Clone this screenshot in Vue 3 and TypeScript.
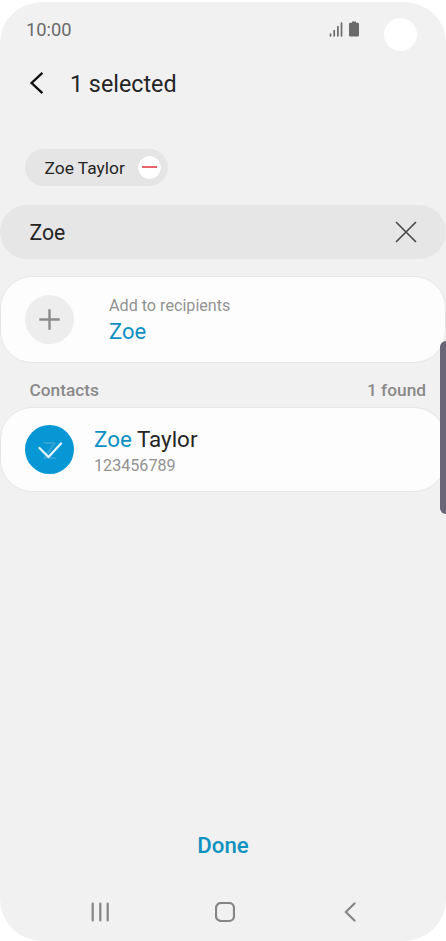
<script setup lang="ts">
import { ref, computed } from 'vue'

interface Contact {
  first: string
  last: string
  phone: string
}

const query = ref('Zoe')
const contacts: Contact[] = [{ first: 'Zoe', last: 'Taylor', phone: '123456789' }]
const selected = ref<Contact[]>([...contacts])
const selectedLabel = computed(() => `${selected.value.length} selected`)
const foundLabel = computed(() => `${contacts.length} found`)
</script>

<template>
  <main class="screen">
    <header class="status">
      <span class="time">10:00</span>
      <svg class="status-icons" width="32" height="18" viewBox="0 0 32 18">
        <path d="M2.500 14.200V15.800M6.200 10.700V15.800M9.900 6.700V15.800M13.500 3V15.800" />
        <path class="battery" d="M24 1.500h4v1.300h1.800q1.200 0 1.200 1.200v11.300q0 1.200-1.200 1.200h-7.600q-1.200 0-1.200-1.200V4q0-1.200 1.200-1.200H24z" />
      </svg>
      <span class="camera"></span>
    </header>

    <div class="title-bar">
      <svg class="back" width="16" height="24" viewBox="0 0 16 24">
        <path d="M14.400 1.800 3.600 12l10.800 10.200" />
      </svg>
      <h1>{{ selectedLabel }}</h1>
    </div>

    <div class="chips">
      <div v-for="c in selected" :key="c.phone" class="chip">
        <span class="chip-name">{{ c.first }} {{ c.last }}</span>
        <span class="remove"><i></i></span>
      </div>
    </div>

    <div class="search">
      <span class="query">{{ query }}</span>
      <svg width="22" height="22" viewBox="0 0 22 22">
        <path d="M1.500 1.500l19 19M20.500 1.500l-19 19" />
      </svg>
    </div>

    <section class="card add">
      <span class="avatar plus">
        <svg width="21" height="21" viewBox="0 0 21 21"><path d="M.3 10.500h20.400M10.500 .3v20.400" /></svg>
      </span>
      <div class="lines">
        <span class="hint">Add to recipients</span>
        <span class="name match">{{ query }}</span>
      </div>
    </section>

    <div class="section-head">
      <span>Contacts</span>
      <span>{{ foundLabel }}</span>
    </div>

    <section v-for="c in contacts" :key="c.phone" class="card contact">
      <span class="avatar checked">
        <span class="initial">Z</span>
        <svg width="26" height="20" viewBox="0 0 26 20"><path d="M2.500 8l9 9L24 3.500" /></svg>
      </span>
      <div class="lines">
        <span class="name"><span class="match">{{ c.first }}</span> {{ c.last }}</span>
        <span class="hint">{{ c.phone }}</span>
      </div>
    </section>

    <div class="done">Done</div>

    <nav class="nav">
      <svg width="20" height="20" viewBox="0 0 20 20"><path d="M2.700 1.500v17M10.300 1.500v17M17.700 1.500v17" /></svg>
      <svg width="20" height="20" viewBox="0 0 20 20"><rect x="1" y="1" width="18" height="18" rx="5" /></svg>
      <svg width="20" height="20" viewBox="0 0 20 20"><path d="M14.500 1.500 5.800 10l8.700 8.500" /></svg>
    </nav>

    <div class="edge-handle"></div>
  </main>
</template>

<style>
body {
  background: #fff;
}
</style>

<style scoped>
.screen {
  position: relative;
  box-sizing: border-box;
  width: 446px;
  height: 941px;
  border-top: 2px solid #fff;
  overflow: hidden;
  border-radius: 42px;
  background: #f1f1f1;
  background-clip: padding-box;
  font-family: Roboto, "Liberation Sans", sans-serif;
  color: #252525;
  display: flex;
  flex-direction: column;
}
svg {
  display: block;
  flex: none;
  fill: none;
  stroke-linecap: round;
  stroke-linejoin: round;
}
.status {
  height: 56px;
  display: flex;
  align-items: center;
  padding-left: 26px;
}
.time {
  width: 302px;
  margin-top: -2px;
  font-size: 18.3px;
  color: #6a6a6a;
}
.status-icons {
  width: 32px;
  margin-top: -2px;
  stroke: #6a6a6a;
  stroke-width: 1.7;
}
.battery {
  fill: #6a6a6a;
  stroke: none;
}
.camera {
  width: 33px;
  height: 33px;
  margin: 8px 0 0 24px;
  border-radius: 50%;
  background: #fff;
}
.title-bar {
  height: 52px;
  display: flex;
  align-items: center;
  padding-left: 28px;
}
.back {
  margin-top: -3px;
  stroke: #111;
  stroke-width: 2.4;
  stroke-linecap: butt;
  stroke-linejoin: miter;
}
h1 {
  margin: 0 0 0 26px;
  font-size: 23.3px;
  font-weight: 400;
}
.chips {
  padding: 39px 0 0 25px;
  height: 55.5px;
  display: flex;
  align-items: flex-start;
}
.chip {
  box-sizing: border-box;
  width: 143px;
  height: 36.5px;
  padding: 0 7px 0 19.5px;
  border-radius: 19px;
  background: #e5e5e5;
  display: flex;
  align-items: center;
  justify-content: space-between;
  font-size: 17.4px;
}
.chip-name {
  padding-top: 1px;
}
.remove {
  width: 23px;
  height: 23px;
  border-radius: 50%;
  background: #fff;
  box-shadow: 0 0 1px #0002;
  display: flex;
  align-items: center;
  justify-content: center;
}
.remove i {
  width: 15px;
  height: 2px;
  background: #e9646c;
}
.search {
  box-sizing: border-box;
  height: 54.5px;
  padding: 0 29px 0 29.5px;
  border-radius: 27px;
  background: #e6e6e6;
  display: flex;
  align-items: center;
  justify-content: space-between;
  font-size: 21.2px;
}
.query {
  padding-top: 2px;
}
.search svg {
  stroke: #4a4a4a;
  stroke-width: 1.7;
}
.card {
  box-sizing: border-box;
  border: 1px solid #e6e6e6;
  border-radius: 32px;
  background: #fdfdfd;
  display: flex;
  align-items: center;
  padding-left: 24px;
}
.add {
  margin-top: 17px;
  height: 87px;
}
.contact {
  height: 85px;
}
.avatar {
  width: 49px;
  height: 49px;
  flex: none;
  border-radius: 50%;
  display: grid;
  place-items: center;
}
.plus {
  background: #ededed;
}
.plus svg {
  stroke: #8c8c8c;
  stroke-width: 2.4;
  stroke-linecap: butt;
}
.checked {
  background: #0797d4;
}
.checked > * {
  grid-area: 1 / 1;
}
.checked svg {
  stroke: #e2f6ff;
  stroke-width: 2.3;
}
.initial {
  padding-top: 2px;
  font-size: 24px;
  line-height: 24px;
  color: #33a3d5;
}
.lines {
  display: flex;
  flex-direction: column;
}
.add .lines {
  margin-left: 35px;
  padding-bottom: 2px;
}
.contact .lines {
  margin-left: 20px;
  padding-top: 4px;
}
.hint {
  font-size: 16.15px;
  line-height: 26px;
  color: #929292;
}
.contact .hint {
  line-height: 25px;
}
.name {
  font-size: 22.4px;
  line-height: 27px;
}
.add .name {
  font-size: 22px;
  line-height: 25px;
}
.match {
  color: #0c90c4;
}
.section-head {
  box-sizing: border-box;
  height: 44px;
  padding: 9px 20px 0 29.5px;
  display: flex;
  align-items: center;
  justify-content: space-between;
  font-size: 17.3px;
  font-weight: 500;
  color: #8a8a8a;
}
.done {
  margin-top: auto;
  height: 40px;
  line-height: 40px;
  text-align: center;
  font-size: 22.2px;
  font-weight: 500;
  color: #0d92c0;
}
.nav {
  height: 28px;
  margin-top: 37px;
  padding: 0 86px 11px 90px;
  display: flex;
  justify-content: space-between;
}
.nav svg {
  stroke: #858585;
  stroke-width: 2.2;
}
.edge-handle {
  position: absolute;
  right: 0;
  top: 339px;
  width: 6px;
  height: 173px;
  border-radius: 6px 0 0 6px;
  background: #6a6677;
}
</style>
